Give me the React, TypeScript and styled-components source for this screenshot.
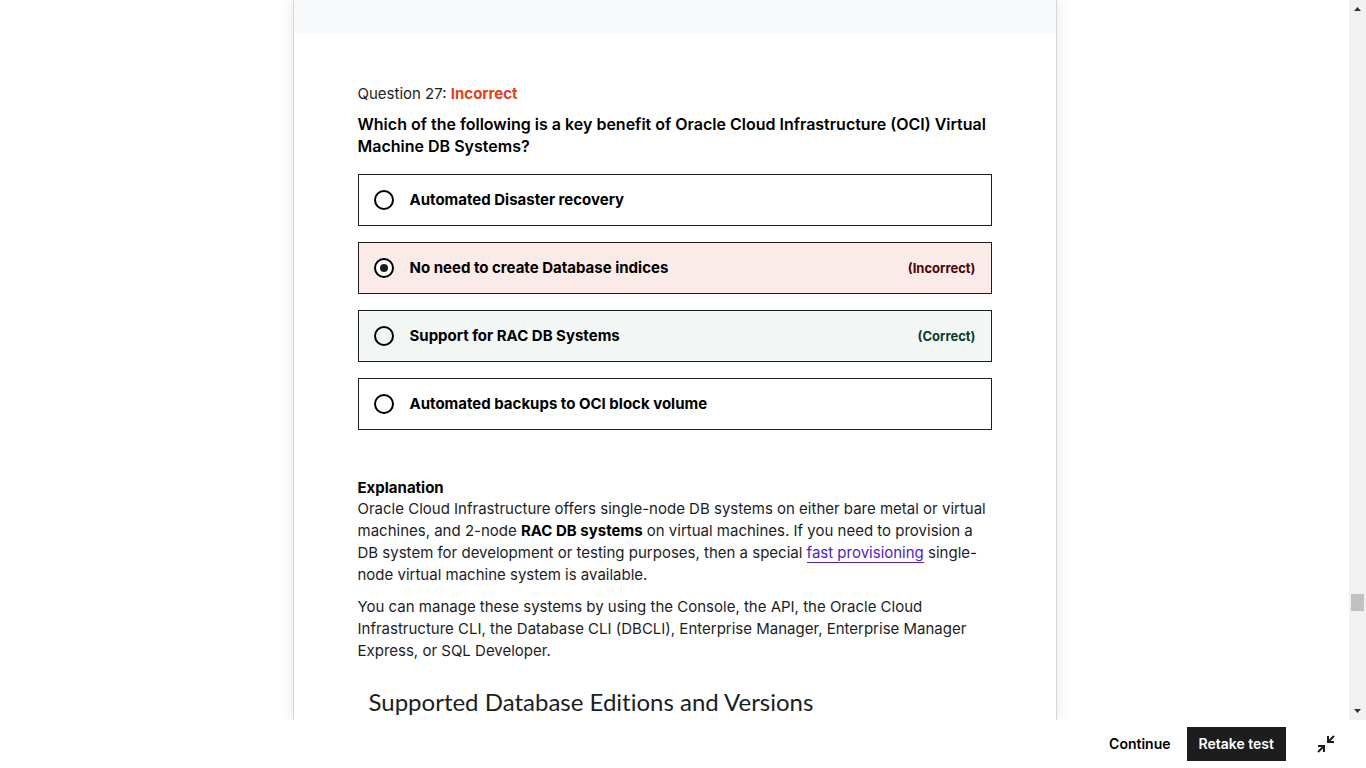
import React from 'react';
import styled, { createGlobalStyle } from 'styled-components';

const GlobalStyle = createGlobalStyle`
  *, *::before, *::after { box-sizing: border-box; }
  body {
    margin: 0;
    background: #fff;
    color: #1c1d1f;
    font: 400 15px/22px Inter, sans-serif;
  }
  h1, h2, h3, p, fieldset { margin: 0; padding: 0; border: 0; min-width: 0; }
  button { font: inherit; cursor: pointer; border: 0; }
`;

const Page = styled.div`
  display: flex;
  flex-direction: column;
  height: 100vh;
`;

const Viewer = styled.div`
  display: flex;
  flex: 1;
  min-height: 0;
`;

const Content = styled.main`
  display: flex;
  justify-content: center;
  flex: 1;
  min-width: 0;
  overflow: hidden;
`;

const Sheet = styled.article`
  width: 100%;
  max-width: 764px;
  min-height: 100%;
  height: max-content;
  border: solid #d1d7dc;
  border-width: 0 1px;
  box-shadow: 0 0 12px rgba(28, 29, 31, 0.12);
`;

const Band = styled.div`
  height: 34px;
  background: #f8f9fb;
`;

const Question = styled.section`
  padding: 49px 64px 0;
`;

const Status = styled.p`
  margin-bottom: 8px;

  strong { color: #e0411c; }
`;

const Prompt = styled.legend`
  padding: 0;
  margin-bottom: 17px;
  font-size: 16px;
  font-weight: 600;
  color: #000;
`;

const Options = styled.div`
  display: grid;
  gap: 16px;
`;

type Result = 'incorrect' | 'correct';

const tones = {
  incorrect: { fill: '#fbebe8', text: '#4d0308' },
  correct: { fill: '#f2f7f6', text: '#073d2c' },
};

const Option = styled.label<{ $result?: Result }>`
  display: flex;
  align-items: center;
  gap: 16px;
  min-height: 52px;
  padding: 0 15px;
  border: 1px solid #1c1d1f;
  background: ${({ $result }) => ($result ? tones[$result].fill : '#fff')};
  color: #000;
  font-weight: 700;
`;

const Radio = styled.input`
  display: grid;
  place-items: center;
  flex: none;
  appearance: none;
  width: 20px;
  height: 20px;
  margin: 0;
  border: 2px solid #000;
  border-radius: 50%;

  &:checked { background: #fff; }
  &:checked::before {
    content: '';
    width: 8px;
    height: 8px;
    border-radius: 50%;
    background: #1c1d1f;
  }
`;

const Tag = styled.span<{ $result: Result }>`
  margin-left: auto;
  font-size: 13px;
  color: ${({ $result }) => tones[$result].text};
`;

const Explanation = styled.section`
  margin-top: 48px;

  p + p { margin-top: 10px; }
  strong { color: #000; }
`;

const ExplanationTitle = styled.h2`
  font-size: 15px;
  line-height: 20px;
  color: #000;
`;

const TextLink = styled.a`
  color: #5022c3;
  text-decoration: none;
  border-bottom: 1px solid #5022c3;
`;

const Topic = styled.h3`
  margin-top: 24px;
  padding-left: 11px;
  font: 400 24px/32px Lato, sans-serif;
  font-variant-ligatures: none;
`;

const Scrollbar = styled.div`
  display: flex;
  flex-direction: column;
  align-items: center;
  justify-content: space-between;
  width: 17px;
  background: #f1f1f1;
`;

const Track = styled.div`
  display: grid;
  grid-template-rows: 576fr 17px 92fr;
  flex: 1;
  width: 13px;
`;

const Thumb = styled.div`
  grid-row: 2;
  background: #c1c1c1;
`;

const ArrowBox = styled.svg`
  display: block;
  width: 17px;
  height: 17px;
  fill: #333;
`;

const Footer = styled.footer`
  display: flex;
  align-items: center;
  justify-content: flex-end;
  height: 48px;
  padding-right: 16px;
`;

const Action = styled.button<{ $primary?: boolean }>`
  height: 34px;
  padding: 0 ${({ $primary }) => ($primary ? 12 : 16)}px;
  background: ${({ $primary }) => ($primary ? '#1c1d1f' : 'transparent')};
  color: ${({ $primary }) => ($primary ? '#fff' : '#000')};
  font-size: 14px;
  font-weight: 600;
`;

const IconAction = styled.button`
  display: grid;
  place-items: center;
  width: 48px;
  height: 34px;
  margin-left: 16px;
  padding: 0;
  background: transparent;
`;

const answers: { text: string; result?: Result; chosen?: boolean }[] = [
  { text: 'Automated Disaster recovery' },
  { text: 'No need to create Database indices', result: 'incorrect', chosen: true },
  { text: 'Support for RAC DB Systems', result: 'correct' },
  { text: 'Automated backups to OCI block volume' },
];

const labels = { incorrect: '(Incorrect)', correct: '(Correct)' };

export default function App() {
  return (
    <Page>
      <GlobalStyle />
      <Viewer>
        <Content>
          <Sheet>
            <Band />
            <Question>
              <Status>
                Question 27: <strong>Incorrect</strong>
              </Status>
              <fieldset>
                <Prompt>
                  Which of the following is a key benefit of Oracle Cloud Infrastructure (OCI) Virtual Machine DB
                  Systems?
                </Prompt>
                <Options>
                  {answers.map(({ text, result, chosen }) => (
                    <Option key={text} $result={result}>
                      <Radio type="radio" name="answer" defaultChecked={chosen} />
                      {text}
                      {result && <Tag $result={result}>{labels[result]}</Tag>}
                    </Option>
                  ))}
                </Options>
              </fieldset>
              <Explanation>
                <ExplanationTitle>Explanation</ExplanationTitle>
                <p>
                  Oracle Cloud Infrastructure offers single-node DB systems on either bare metal or virtual machines,
                  and 2-node <strong>RAC DB systems</strong> on virtual machines. If you need to provision a DB system
                  for development or testing purposes, then a special <TextLink href="#">fast provisioning</TextLink>{' '}
                  single-node virtual machine system is available.
                </p>
                <p>
                  You can manage these systems by using the Console, the API, the Oracle Cloud Infrastructure CLI, the
                  Database CLI (DBCLI), Enterprise Manager, Enterprise Manager Express, or SQL Developer.
                </p>
                <Topic>Supported Database Editions and Versions</Topic>
              </Explanation>
            </Question>
          </Sheet>
        </Content>
        <Scrollbar aria-hidden="true">
          <ArrowBox viewBox="0 0 17 17">
            <path d="M5 11h7L8.5 7z" />
          </ArrowBox>
          <Track>
            <Thumb />
          </Track>
          <ArrowBox viewBox="0 0 17 17">
            <path d="M5 6h7L8.5 10z" />
          </ArrowBox>
        </Scrollbar>
      </Viewer>
      <Footer>
        <Action type="button">Continue</Action>
        <Action type="button" $primary>
          Retake test
        </Action>
        <IconAction type="button" aria-label="Exit expanded view">
          <svg width="18" height="18" viewBox="0 0 18 18" fill="none" stroke="#1c1d1f" strokeWidth="2">
            <path d="M17 1l-5.500 5.500M11 1v6h6M1 17l5.500-5.500M1 11h6v6" />
          </svg>
        </IconAction>
      </Footer>
    </Page>
  );
}
